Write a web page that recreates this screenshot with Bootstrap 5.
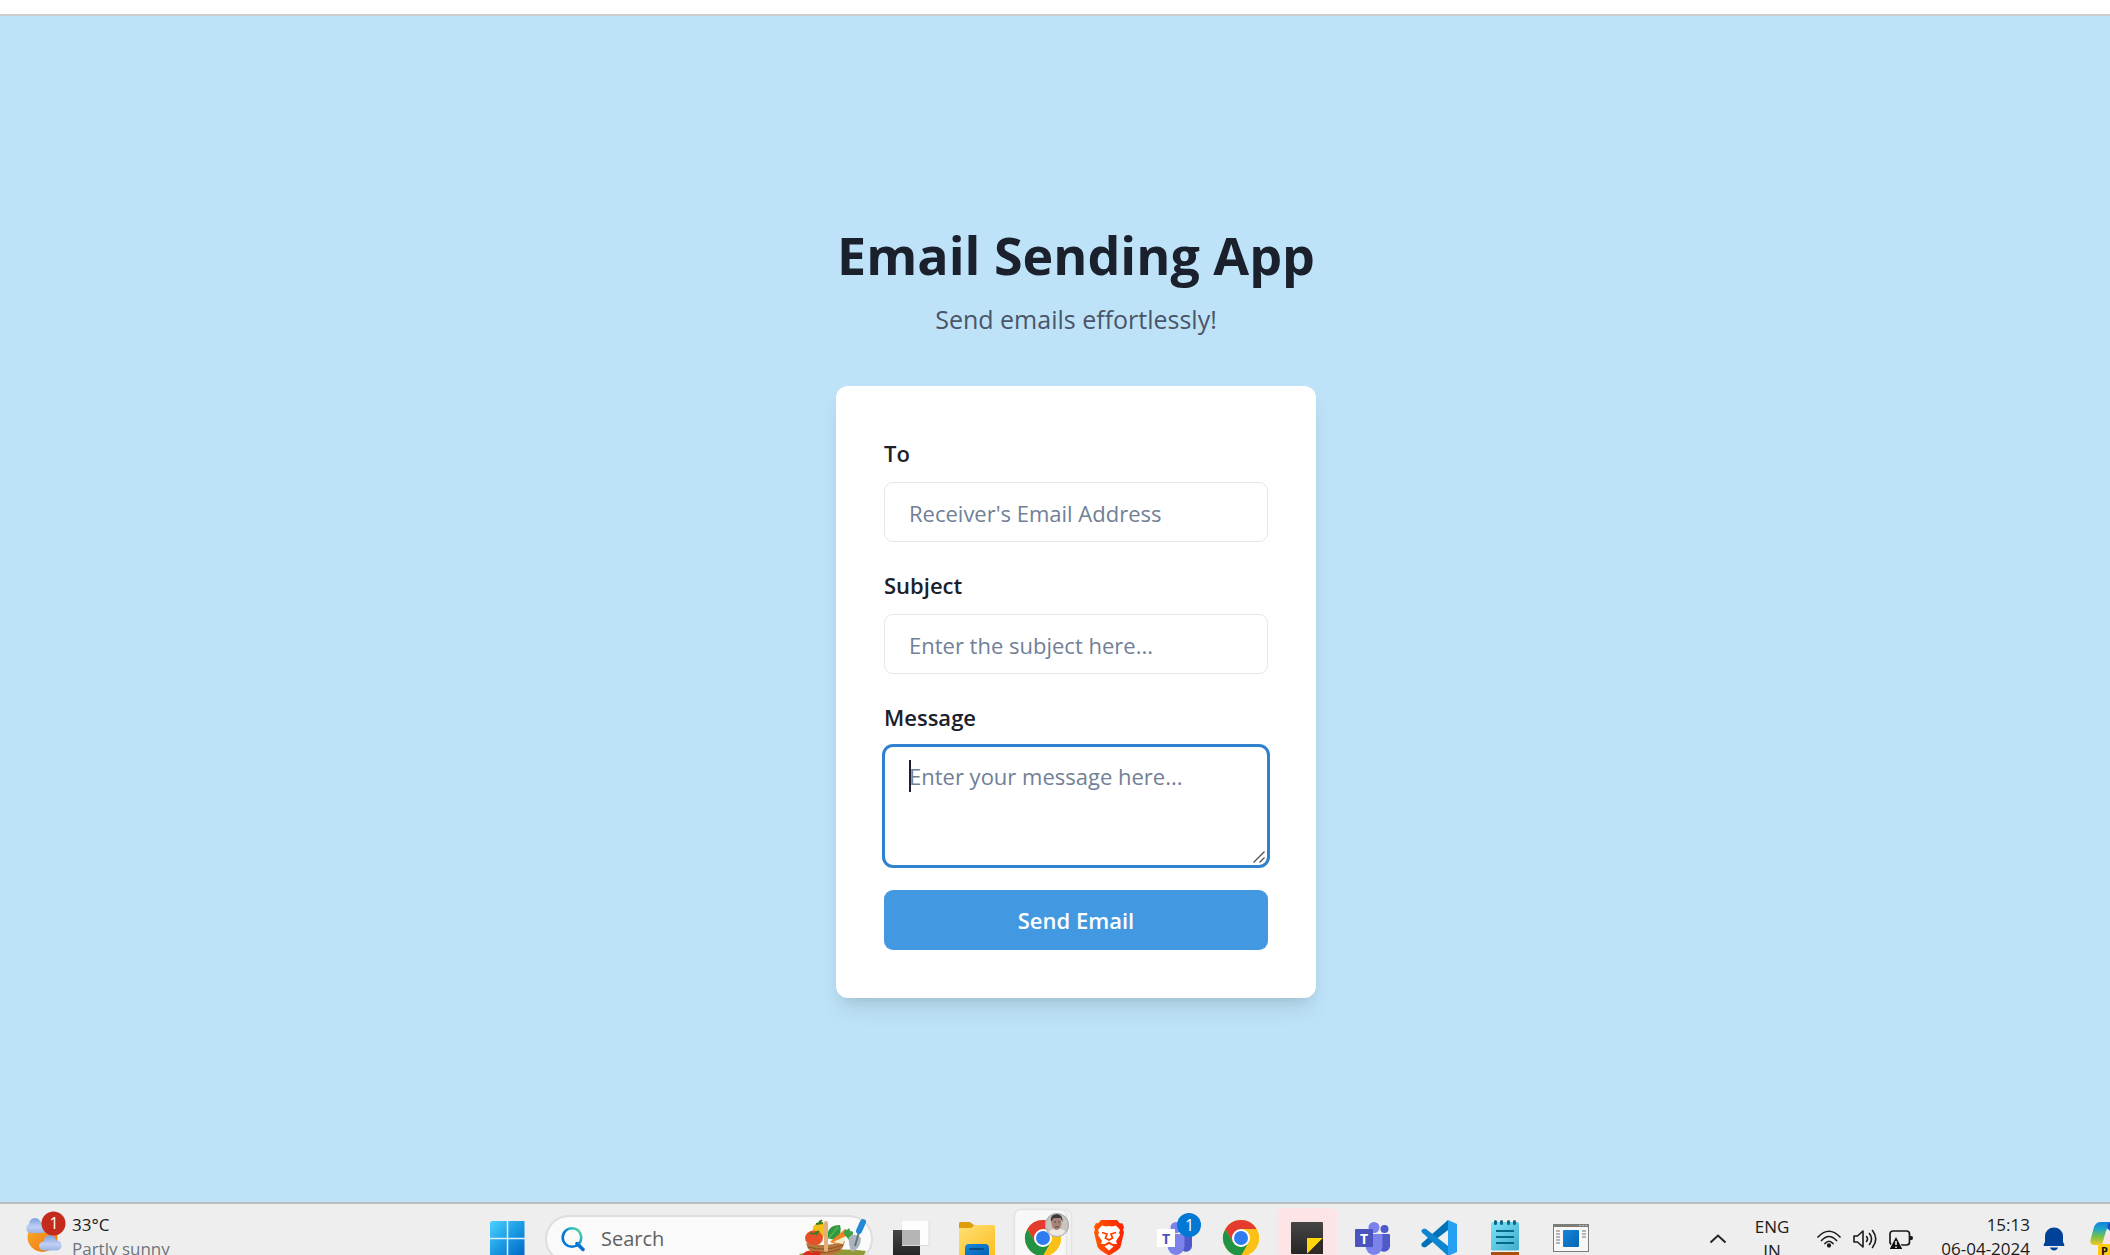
<!DOCTYPE html>
<html lang="en">
<head>
<meta charset="utf-8">
<meta name="viewport" content="width=device-width, initial-scale=1">
<title>Email Sending App</title>
<link href="https://cdn.jsdelivr.net/npm/bootstrap@5.3.0/dist/css/bootstrap.min.css" rel="stylesheet">
<style>
body{font-family:"Open Sans","Noto Sans",sans-serif;background:#bee3f8;color:#1a202c}
.toolbar-edge{height:16px;background:#fff;border-bottom:2px solid #ccc}
.stage{padding-left:42px}
.panel{width:480px}
.app-title{font-size:52px;line-height:70px;font-weight:700;margin-bottom:8px}
.app-sub{font-size:25px;line-height:42px;color:#4a5568;margin-bottom:46px}
.mail-form{padding:48px;border-radius:12px;box-shadow:0 15px 22px -4px rgba(0,0,0,.1),0 6px 9px -3px rgba(0,0,0,.05)}
.mail-form .form-label{font-size:22px;line-height:38px;font-weight:600;margin-bottom:10px}
.field{margin-bottom:24px}
.mail-form .form-control{font-size:22px;color:#1a202c;border:1px solid #e2e8f0;border-radius:9px;padding:2px 24px 0}
.mail-form input.form-control{height:60px}
.mail-form textarea.form-control{height:120px;line-height:36px;padding-top:11px;resize:none;border-color:#3182ce;box-shadow:0 0 0 2px #3182ce;caret-color:transparent}
.mail-form .form-control::placeholder{color:#718096;opacity:1}
.text-caret{left:25px;top:14px;width:2px;height:32px;background:#1a202c}
.grip{right:3px;bottom:3px}
.send-btn,.send-btn:hover{height:60px;border:0;border-radius:9px;background:#4299e1;color:#fff;font-size:22px;font-weight:600}
.taskbar{height:53px;background:#eee;border-top:2px solid #b8bcbf;font-size:17px;line-height:24px;color:#1b1b1b}
.taskbar-row{height:70px}
.taskbar button{border:0;background:none;padding:0;color:inherit;flex:none}
.taskbar svg{display:block}
.weather{width:474px;padding-left:22px}
.two-line{padding-bottom:4px}
.search-pill{width:328px;height:48px;margin:0 5px;border:2px solid #dedede;border-radius:24px;background:#fafafa;padding-left:14px}
.search-pill input{width:180px;border:0;background:none;outline:0;font-size:20px;padding:0;margin-left:16px}
.search-pill input::placeholder{color:#606060;opacity:1}
.tray{gap:12px}
.taskbar .bell{margin-right:12px}
</style>
<script src="https://cdn.jsdelivr.net/npm/bootstrap@5.3.0/dist/js/bootstrap.bundle.min.js"></script>
</head>
<body class="vh-100 d-flex flex-column overflow-hidden">
<svg width="0" height="0" class="position-absolute" aria-hidden="true">
  <defs>
    <linearGradient id="win" x1="0" y1="0" x2="1" y2="1"><stop offset="0" stop-color="#4cd2ff"/><stop offset=".5" stop-color="#1c9be3"/><stop offset="1" stop-color="#0067c8"/></linearGradient>
    <linearGradient id="lens" x1="0" y1="1" x2="1" y2="0"><stop offset=".45" stop-color="#0078d4"/><stop offset=".7" stop-color="#2bb5c4"/><stop offset="1" stop-color="#62e08a"/></linearGradient>
    <linearGradient id="sun" x1="0" y1="0" x2="1" y2="1"><stop offset="0" stop-color="#f6b02c"/><stop offset="1" stop-color="#f2700f"/></linearGradient>
    <linearGradient id="cloud" x1="0" y1="0" x2="0" y2="1"><stop offset="0" stop-color="#7f9fe0"/><stop offset=".6" stop-color="#bfd0f3"/><stop offset="1" stop-color="#9bb4e6"/></linearGradient>
    <linearGradient id="folder" x1="0" y1="0" x2="1" y2="1"><stop offset="0" stop-color="#ffdf78"/><stop offset="1" stop-color="#fdbf1e"/></linearGradient>
    <linearGradient id="blue" x1="0" y1="0" x2="1" y2="1"><stop offset="0" stop-color="#1587dc"/><stop offset="1" stop-color="#0463b3"/></linearGradient>
    <linearGradient id="lion" x1="0" y1="0" x2="1" y2="0"><stop offset="0" stop-color="#ff5a00"/><stop offset="1" stop-color="#ff2000"/></linearGradient>
    <linearGradient id="pad" x1="0" y1="0" x2="1" y2="1"><stop offset="0" stop-color="#7ce4f8"/><stop offset="1" stop-color="#3fabcb"/></linearGradient>
    <linearGradient id="dark" x1="0" y1="0" x2="0" y2="1"><stop offset="0" stop-color="#464646"/><stop offset="1" stop-color="#262626"/></linearGradient>
    <linearGradient id="pilot" x1="0" y1="0" x2="0" y2="1"><stop offset="0" stop-color="#1680de"/><stop offset=".3" stop-color="#20a5c8"/><stop offset=".65" stop-color="#7cc142"/><stop offset="1" stop-color="#f5c52a"/></linearGradient>
    <g id="chrome">
      <circle r="18" fill="#fbc116"/>
      <path d="M0-9H15.6A18 18 0 0 0-15.6-9L-7.8 4.5Z" fill="#e33b2e"/>
      <path d="M-15.6-9A18 18 0 0 0 0 18L7.8 4.5H-7.8Z" fill="#229342"/>
      <path d="M7.8 4.5L0 18A18 18 0 0 0 15.6-9H0Z" fill="#fbc116"/>
      <circle r="9" fill="#fff"/><circle r="7" fill="#2f7bf0"/>
    </g>
    <g id="team-body">
      <circle cx="44.500" cy="25" r="4" fill="#5059c9"/>
      <path d="M38 30H49a1 1 0 0 1 1 1V40a6 6 0 0 1-12 3Z" fill="#5059c9"/>
      <circle cx="34" cy="23.500" r="5.500" fill="#7b83eb"/>
      <path d="M26 30H41a1.500 1.500 0 0 1 1.500 1.500V42a8.500 9 0 0 1-17 0Z" fill="#7b83eb"/>
    </g>
  </defs>
</svg>

<header class="toolbar-edge flex-shrink-0"></header>

<main class="stage flex-grow-1 d-flex align-items-center justify-content-center">
  <div class="panel">
    <div class="text-center text-nowrap">
      <h1 class="app-title">Email Sending App</h1>
      <p class="app-sub">Send emails effortlessly!</p>
    </div>
    <form class="mail-form bg-white">
      <div class="field">
        <label class="form-label d-block" for="to">To</label>
        <input class="form-control" id="to" type="email" placeholder="Receiver's Email Address">
      </div>
      <div class="field">
        <label class="form-label d-block" for="subject">Subject</label>
        <input class="form-control" id="subject" type="text" placeholder="Enter the subject here...">
      </div>
      <div class="field">
        <label class="form-label d-block" for="message">Message</label>
        <div class="position-relative">
          <textarea class="form-control d-block" id="message" placeholder="Enter your message here..."></textarea>
          <span class="text-caret position-absolute"></span>
          <svg class="grip position-absolute" width="12" height="12" viewBox="0 0 12 12" stroke="#505050" stroke-width="1.300" aria-hidden="true"><path d="M.5 11.500L11.500 .5M6.500 11.500L11.500 6.500"/></svg>
        </div>
      </div>
      <button class="send-btn btn w-100" type="button">Send Email</button>
    </form>
  </div>
</main>

<footer class="taskbar flex-shrink-0 overflow-hidden">
  <div class="taskbar-row d-flex align-items-center text-nowrap">
    <div class="weather d-flex align-items-center flex-shrink-0">
      <svg width="50" height="70" viewBox="22 0 50 70" role="img" aria-label="Partly sunny">
        <circle cx="42.500" cy="33" r="15" fill="url(#sun)"/>
        <path d="M29 29a5 5 0 0 1 0-9 6 6 0 0 1 12 0 5 5 0 0 1 3 9Z" fill="url(#cloud)"/>
        <path d="M43 46.500a4.500 4.500 0 0 1 1-9 6 6 0 0 1 12-1 5 5 0 0 1 1 10Z" fill="url(#cloud)"/>
        <circle cx="53.500" cy="19.500" r="12" fill="#c42b1c"/>
        <text x="54" y="25" font-size="16" fill="#fff" text-anchor="middle">1</text>
      </svg>
      <div class="two-line"><div>33°C</div><div class="text-secondary">Partly sunny</div></div>
    </div>

    <button type="button" aria-label="Start"><svg width="66" height="70"><path d="M17.500 17H50.500V52H16V18.500Z" fill="url(#win)"/><path d="M33.500 17V52M16 34.500H51" stroke="#d9eefa" stroke-width="1.500"/></svg></button>

    <div class="search-pill d-flex align-items-center flex-shrink-0">
      <svg width="24" height="26" viewBox="0 0 24 26" fill="none" aria-hidden="true"><path d="M16 17.500L22 23.500" stroke="#0a6fd0" stroke-width="3.500" stroke-linecap="round"/><circle cx="11" cy="11.500" r="9.300" stroke="url(#lens)" stroke-width="2.600"/></svg>
      <input type="search" placeholder="Search" aria-label="Search">
      <svg class="ms-auto me-1" width="68" height="44" viewBox="0 0 68 44" aria-hidden="true">
        <path d="M0 37Q34 30 67 34L62 44H8Z" fill="#8f9a35"/>
        <circle cx="21" cy="13" r="7.500" fill="#f6bf18"/><path d="M20 7q1-4 3-3M17 7l7-1" stroke="#3c7a22" stroke-width="2" fill="none"/>
        <path d="M28 21Q28 8 41 8Q44 17 36 23Z" fill="#2f9a3f"/><path d="M29 22L39 10" stroke="#7bc462"/>
        <ellipse cx="15" cy="21" rx="9" ry="7.500" fill="#e8502a"/><path d="M11 16l4 1 5-3-3 4" stroke="#3c7a22" stroke-width="1.500" fill="none"/>
        <path d="M31 25L46 12L50 17L36 27Z" fill="#f4831f"/><path d="M45 17q0-6 3-4q3-4 3 1q5 0 2 5q4 4-3 4Z" fill="#3fa045"/>
        <path d="M7 26Q26 31 46 24Q43 37 33 38H19Q9 36 7 26Z" fill="#b8773a"/>
        <path d="M9 30Q26 35 44 28M12 34Q26 38 41 32" stroke="#8a5223" fill="none"/>
        <path d="M34 25L47 19L44 27Z" fill="#f5eecb"/>
        <path d="M27 33V6" stroke="#e2b078" stroke-width="4" stroke-linecap="round"/>
        <path d="M4 37q6-6 9-1q5-4 9 0l-5 7H6Z" fill="#d92a1c"/>
        <path d="M50 20Q56 15 62 21Q62 31 53 35Q49 28 50 20Z" fill="#a9b4bf"/><path d="M56 29L60 15" stroke="#66737f" stroke-width="2"/>
        <path d="M60 14L64 5" stroke="#2489d4" stroke-width="6" stroke-linecap="round"/>
      </svg>
    </div>

    <button type="button" aria-label="Task view"><svg width="66" height="70"><path d="M15 26H42V51H15Z" fill="url(#dark)"/><rect x="24" y="17" width="27" height="24" rx="1" fill="#fff" opacity=".85"/><path d="M24 26H42V41H24Z" fill="#b5b5b5"/><path d="M51 17V41.500H24" stroke="#dcdcdc" fill="none"/></svg></button>
    <button type="button" aria-label="File Explorer"><svg width="66" height="70"><path d="M15 19.500Q15 18 16.500 18H26L31 22V27H15Z" fill="#dd9d09"/><path d="M15 24H27L31 21H49.500Q51 21 51 22.500V51H15Z" fill="url(#folder)"/><path d="M21 51V44a4 4 0 0 1 4-4H41a4 4 0 0 1 4 4V51Z" fill="url(#blue)"/><path d="M26 45H39" stroke="#0b4b86" stroke-width="2" stroke-linecap="round"/></svg></button>
    <button type="button" aria-label="Chrome, personal profile"><svg width="66" height="70"><rect x="4.500" y="5.500" width="57" height="60" rx="6" fill="#f2f2f2" stroke="#e4e4e4" stroke-width="1.500"/><rect x="4.500" y="5.500" width="52" height="60" rx="6" fill="#f8f8f8" stroke="#e4e4e4" stroke-width="1.500"/><use href="#chrome" x="33" y="34"/><circle cx="47" cy="21" r="12" fill="#c9c4c0"/><path d="M38 29q3-4 6-4h5q5 0 7 3a12 12 0 0 1-18 1Z" fill="#ece8e5"/><ellipse cx="46.500" cy="19" rx="5" ry="7" fill="#a78478"/><path d="M41 18q-1-8 5.500-8t6 8l-2-4h-7Z" fill="#3e3835"/><path d="M44 18h2m2 0h2M45 23h4" stroke="#5c4239"/><circle cx="47" cy="21" r="11.500" fill="none" stroke="#aaa"/></svg></button>
    <button type="button" aria-label="Brave"><svg width="66" height="70"><path d="M25 16H41L44 19.500L46 19L48 23L47 26L48 28L44.500 43Q43 46 33 51.500Q23 46 21.500 43L18 28L19 26L18 23L20 19L22 19.500Z" fill="url(#lion)"/><path d="M22 26L26 21.500L30 22.500L33 22L36 22.500L40 21.500L44 26L43 29L44 31L40 37L41 40L37 40L33 37.500L29 40L25 40L26 37L22 31L23 29Z" fill="#fff"/><path d="M26 28.500L31 30L29.500 34L33 36L36.500 34L35 30L40 28.500" fill="none" stroke="#ff3d00" stroke-width="1.800"/><path d="M28.500 42.500L33 40L37.500 42.500L33 46.500Z" fill="#fff"/></svg></button>
    <button type="button" aria-label="Teams, 1 notification"><svg width="66" height="70"><use href="#team-body"/><rect x="15" y="25" width="18" height="18" fill="#fff"/><text x="24" y="39.500" font-size="14" font-weight="700" fill="#4b53bc" text-anchor="middle">T</text><circle cx="47" cy="21" r="12" fill="#0078d4"/><text x="47.500" y="26.500" font-size="16" fill="#fff" text-anchor="middle">1</text></svg></button>
    <button type="button" aria-label="Chrome"><svg width="66" height="70"><use href="#chrome" x="33" y="34"/></svg></button>
    <button type="button" aria-label="Sticky Notes"><svg width="66" height="70"><rect x="3" y="4" width="60" height="62" rx="5" fill="#fde5e7"/><rect x="17" y="18" width="32" height="32" rx="1" fill="url(#dark)"/><path d="M33 34H49L33 50Z" fill="#ffd60a"/><path d="M49 34V50H33Z" fill="#2f2c28"/></svg></button>
    <button type="button" aria-label="Teams"><svg width="66" height="70"><use href="#team-body"/><rect x="15" y="25" width="18" height="18" rx="1" fill="#4b53bc"/><text x="24" y="39.500" font-size="14" font-weight="700" fill="#fff" text-anchor="middle">T</text></svg></button>
    <button type="button" aria-label="Visual Studio Code"><svg width="66" height="70"><path d="M42 16L15.500 39.500V42L18 43.500L20 43L42 26Z" fill="#0072b8"/><path d="M42 52L15.500 28V26L18 24.500L20 25L42 42Z" fill="#0e86cf"/><path d="M42 16L51 20V48L42 52Z" fill="#26a0f2"/></svg></button>
    <button type="button" aria-label="Notepad"><svg width="66" height="70"><rect x="19" y="48" width="28" height="6" fill="#a8500f"/><rect x="19" y="18" width="28" height="29" rx="2" fill="url(#pad)"/><path d="M19 46.500H47V48H19Z" fill="#f2f2f2"/><path d="M24 27H42M24 33H42M24 39H42" stroke="#07688a" stroke-width="2"/><path d="M23.500 17.500V19.500M29.500 17.500V19.500M36.500 17.500V19.500M42.500 17.500V19.500" stroke="#0d6583" stroke-width="3" stroke-linecap="round"/></svg></button>
    <button type="button" aria-label="Program window"><svg width="66" height="70"><rect x="15.500" y="20.500" width="35" height="27" fill="#f7f7f7" stroke="#7c7c78"/><path d="M15 20H51V23H15Z" fill="#7c7c78"/><path d="M41 21.500H49" stroke="#bbb" stroke-dasharray="2 1"/><rect x="25" y="26" width="16" height="17" rx="1" fill="url(#blue)"/><path d="M18 27H22M18 30H22M18 33H22M18 36H22M18 39H22M44 27H48M44 30H48M44 33H48" stroke="#a0a0a0" stroke-width="1.500"/></svg></button>

    <div class="tray d-flex align-items-center ms-auto">
      <button class="me-3" type="button" aria-label="Show hidden icons"><svg width="18" height="10" fill="none" stroke="#222" stroke-width="2"><path d="M1.500 8.500L9 1.500L16.500 8.500"/></svg></button>
      <div class="text-center me-3"><div>ENG</div><div>IN</div></div>
      <svg width="24" height="18" fill="none" stroke="#1b1b1b" stroke-width="1.700" stroke-linecap="round" role="img" aria-label="Wi-Fi"><path d="M1 7Q12-4.500 23 7M4.500 10.500Q12 2.500 19.500 10.500M8 13.500Q12 9 16 13.500"/><circle cx="12" cy="15.500" r="1.300" fill="#1b1b1b"/></svg>
      <svg width="24" height="20" fill="none" stroke="#1b1b1b" stroke-width="1.600" stroke-linecap="round" stroke-linejoin="round" role="img" aria-label="Volume"><path d="M1 7H4.500L10 2V18L4.500 13H1ZM13.500 7.500Q15.500 10 13.500 12.500M16.500 4.500Q20.500 10 16.500 15.500M19.500 1.500Q26 10 19.500 18.500"/></svg>
      <svg class="me-3" width="24" height="22" role="img" aria-label="Battery warning"><rect x="1" y="3" width="19.500" height="14" rx="3" fill="none" stroke="#1b1b1b" stroke-width="1.700"/><path d="M21 8h1.500q1.500 0 1.500 2t-1.500 2H21Z" fill="#1b1b1b"/><path d="M7 8L14 21.500H0Z" fill="#111" stroke="#eee"/><path d="M7 13V17M7 18.500V20" stroke="#fff" stroke-width="1.500"/></svg>
      <div class="two-line text-end"><div>15:13</div><div>06-04-2024</div></div>
      <button class="bell" type="button" aria-label="Notifications"><svg width="24" height="24" fill="#00419a"><path d="M2 19Q1 18 3 15V9a9 8.500 0 0 1 18 0V15Q23 18 22 19ZM8 20.500H16Q15 23.500 12 23.500T8 20.500Z"/></svg></button>
      <button type="button" aria-label="Copilot"><svg width="20" height="36"><path d="M20 1H11Q6 1 4 6L1 17Q-1 24 4 24H12L16 10Q17 7 20 7Z" fill="url(#pilot)"/><path d="M20 2Q16 3 18 8L20 10Z" fill="#1b4fc4"/><path d="M20 12Q15 14 14 24H20Z" fill="#fbdfe9"/><rect x="8" y="23" width="16" height="14" rx="2" fill="#ffcb0c"/><text x="11" y="34" font-size="11" font-weight="700" fill="#111">P</text></svg></button>
    </div>
  </div>
</footer>
</body>
</html>
